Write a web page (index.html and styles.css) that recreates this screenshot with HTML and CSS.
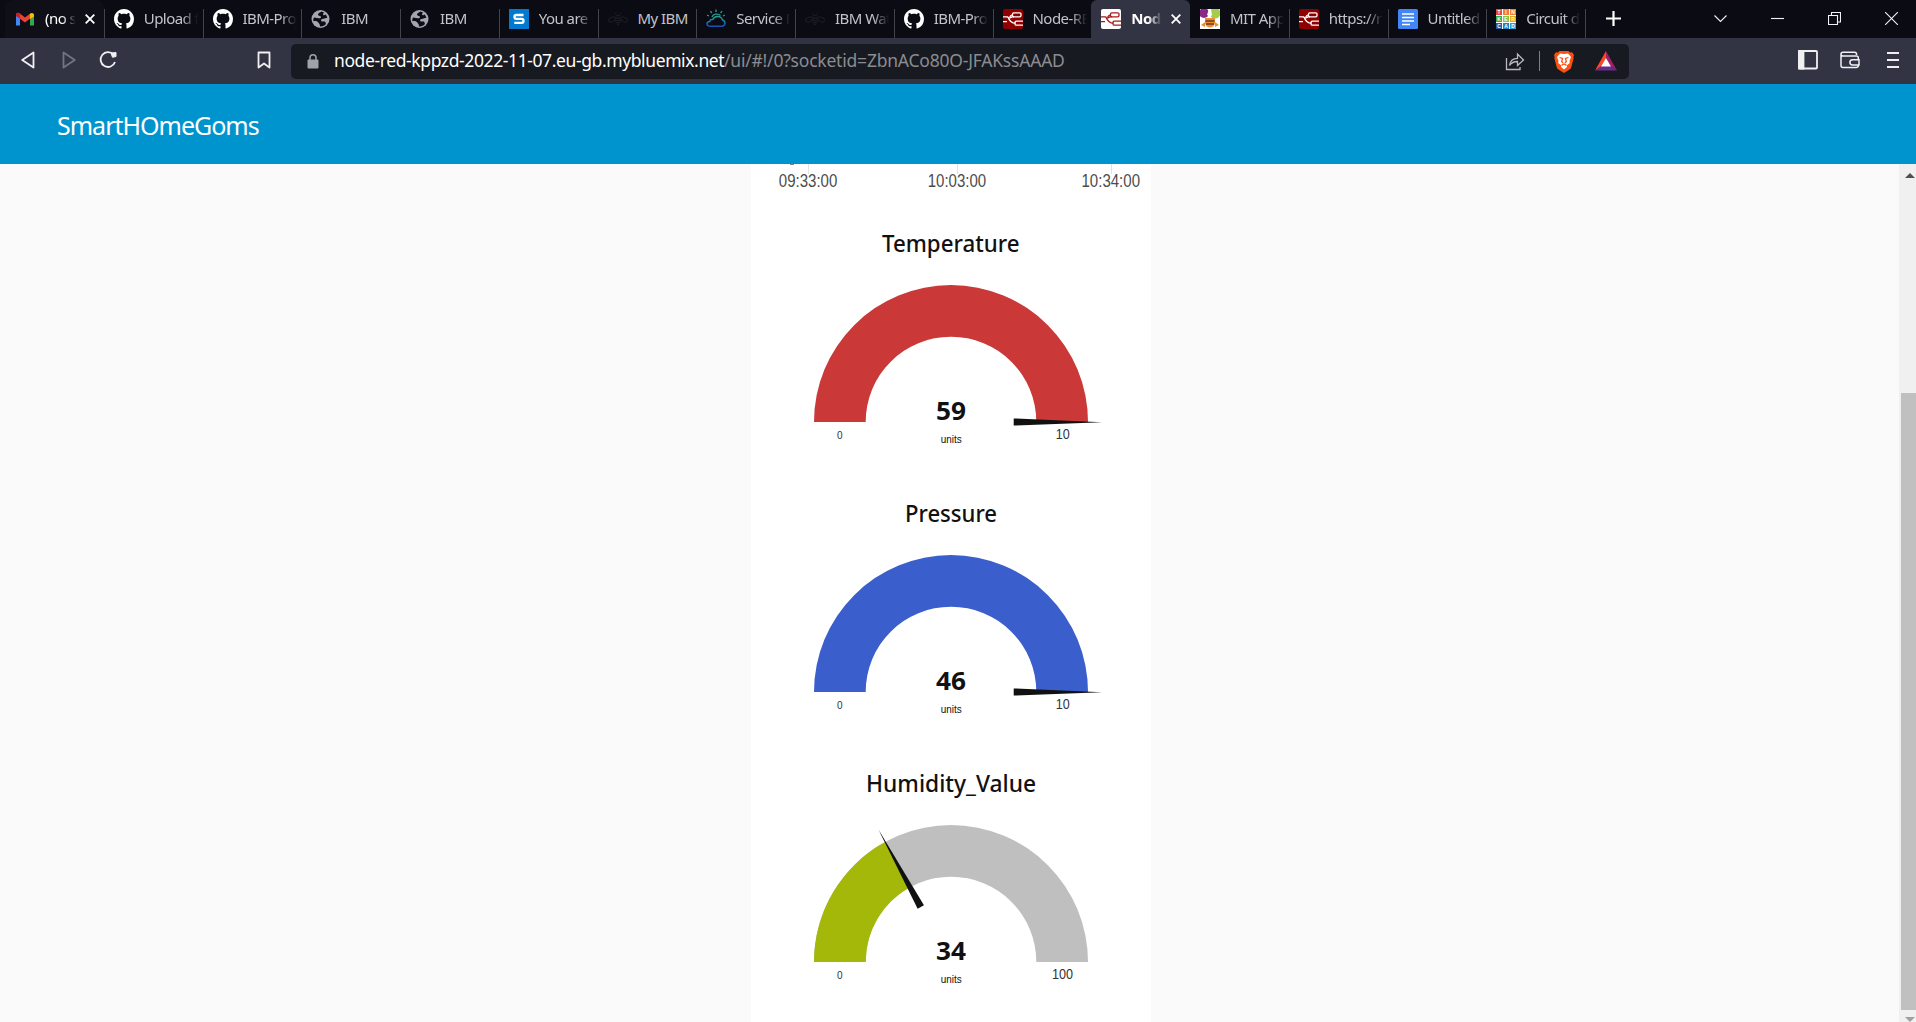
FILE: index.html
```html
<!DOCTYPE html>
<html lang="en">
<head>
<meta charset="utf-8">
<title>Node-RED Dashboard</title>
<link rel="stylesheet" href="styles.css">
</head>
<body>
<svg class="defs" width="0" height="0" aria-hidden="true">
  <symbol id="github" viewBox="0 0 16 16"><path fill="#fff" d="M8 0C3.58 0 0 3.58 0 8c0 3.54 2.29 6.53 5.47 7.59.4.07.55-.17.55-.38 0-.19-.01-.82-.01-1.49-2.01.37-2.53-.49-2.69-.94-.09-.23-.48-.94-.82-1.13-.28-.15-.68-.52-.01-.53.63-.01 1.08.58 1.23.82.72 1.21 1.87.87 2.33.66.07-.52.28-.87.51-1.07-1.78-.2-3.64-.89-3.64-3.95 0-.87.31-1.59.82-2.15-.08-.2-.36-1.02.08-2.12 0 0 .67-.21 2.2.82.64-.18 1.32-.27 2-.27s1.36.09 2 .27c1.53-1.04 2.2-.82 2.2-.82.44 1.1.16 1.92.08 2.12.51.56.82 1.27.82 2.15 0 3.07-1.87 3.75-3.65 3.95.29.25.54.73.54 1.48 0 1.07-.01 1.93-.01 2.2 0 .21.15.46.55.38A8.01 8.01 0 0 0 16 8c0-4.42-3.58-8-8-8z"/></symbol>
  <symbol id="globe" viewBox="0 0 20 20"><circle cx="9.5" cy="10" r="9" fill="#a3a6ae"/><path fill="#0c0c15" d="M10.5 2.500c-1.800 1-4.300 2.200-3.200 3.700.8 1 2.500.3 2.700 1.700.2 1.200-1.400 1.500-2.600 1.300L3.200 8.600C2.300 9.500 2 11 2.500 12.200c1.700-.6 4.300-.2 4.800 1.300.3 1 1.300 1 1.400 2l.3 2c2.700.2 4.600-.8 6-2.500l-.9-2.400c-1.300-.4-3.500.3-4-.9-.5-1.300 1-2 2.400-2 1.600 0 2.300-.8 3.800-.6-.2-1.300-.9-2.600-1.700-3.500-1 .9-2.500.9-2.500-.3 0-.9.400-1.200.9-1.800z"/></symbol>
  <symbol id="bee" viewBox="0 0 20 20"><g fill="none" stroke="#1a1a22" stroke-width="1.300"><ellipse cx="4" cy="10.500" rx="3.700" ry="2.200" transform="rotate(-24 4 10.500)"/><ellipse cx="16" cy="10.500" rx="3.700" ry="2.200" transform="rotate(24 16 10.500)"/><path d="M8 6.500h4M6.800 9h6.400M7 11.500h6M7.500 13.700h5M9 15.500h2M8 5l-1-1.200M12 5l1-1.200"/></g></symbol>
  <symbol id="flow" viewBox="0 0 20 20"><g fill="none" stroke="currentColor" stroke-width="1.300"><rect x="9.500" y="3.800" width="8.500" height="4" rx="1.300"/><rect x="12" y="12.200" width="9" height="4" rx="1.300"/><path d="M0 7.800h4.500c1 1.600 3 1.500 4.500 0h2M5 8c1.500 4.500 4 6.200 7.500 6.200M0 12.600h4M9.500 5.800c-1.500 0-2 .4-2.800 2.200"/></g></symbol>
  <symbol id="close" viewBox="0 0 10 10"><path d="M.7.7l8.600 8.600M9.300.7L.7 9.300" fill="none" stroke="#fff" stroke-width="1.800"/></symbol>
</svg>

<div class="tabstrip">
  <div class="tab first"><svg class="fav" viewBox="0 0 20 20"><path fill="#4285f4" d="M1 6v10.500h4V8z"/><path fill="#34a853" d="M19 6v10.500h-4V8z"/><path fill="#ea4335" d="M1 6c0-2 2-3 3.500-1.700L10 8.500l5.500-4.200v5L10 13.500 5 9.700z"/><path fill="#fbbc04" d="M15 4.700C17 3 19 4.200 19 6v1.500L15 10z"/><path fill="#c5221f" d="M1 6c0-2 2-3 4-1.300v5L1 7z"/></svg><span class="name">(no subject)</span><svg class="x"><use href="#close"/></svg></div>
  <div class="tab"><svg class="fav"><use href="#github"/></svg><span class="name">Upload files</span></div>
  <div class="tab"><svg class="fav"><use href="#github"/></svg><span class="name">IBM-Project</span></div>
  <div class="tab"><svg class="fav"><use href="#globe"/></svg><span class="name">IBM</span></div>
  <div class="tab"><svg class="fav"><use href="#globe"/></svg><span class="name">IBM</span></div>
  <div class="tab"><svg class="fav" viewBox="0 0 20 20"><path fill="#0079cf" d="M0 0h20v20H0z"/><path d="M14.500 6H7.200C5.800 6 5.500 6.500 5.500 7.700S6 9.800 7.200 9.800h5.600c1.300 0 1.700.6 1.700 1.900s-.4 2.100-1.700 2.100H5.300" fill="none" stroke="#fff" stroke-width="2.300"/></svg><span class="name">You are signed</span></div>
  <div class="tab"><svg class="fav"><use href="#bee"/></svg><span class="name whole">My IBM</span></div>
  <div class="tab"><svg class="fav" viewBox="0 0 20 20"><defs><linearGradient id="cl" x2="0" y2="1"><stop stop-color="#279a91"/><stop offset="1" stop-color="#1454b4"/></linearGradient></defs><path d="M4.500 17.200h11.700c3.500-.7 3.700-5.200.3-6.200C15.300 6.600 8.600 6 6.800 10.500c-2-.4-3 .5-3 2-4 .3-3.800 4.700.7 4.700z" fill="none" stroke="url(#cl)" stroke-width="1.500"/><path d="M10 .5v2.500M4.500 2l1.300 2.200M16 2l-1.400 2.200M1 6l2 1M18.800 6.200L17 7M6 8c1-3 6-4 8.500-1.500" fill="none" stroke="#279a91" stroke-width="1.300"/></svg><span class="name">Service Details</span></div>
  <div class="tab"><svg class="fav"><use href="#bee"/></svg><span class="name">IBM Watson</span></div>
  <div class="tab"><svg class="fav"><use href="#github"/></svg><span class="name">IBM-Project</span></div>
  <div class="tab no-line"><svg class="fav red"><use href="#flow"/></svg><span class="name">Node-RED</span></div>
  <div class="tab active"><svg class="fav white"><use href="#flow"/></svg><span class="name">Node-RED</span><svg class="x"><use href="#close"/></svg></div>
  <div class="tab"><svg class="fav" viewBox="0 0 20 20"><path fill="#fff" d="M0 0h20v20H0z"/><circle cx="4" cy="4" r="5" fill="#8b2a86"/><circle cx="15" cy="4" r="5.500" fill="#a3cd4b"/><path fill="#fff" d="M9 0h2l1 6-2 2-3-2z"/><path fill="#ef8b31" d="M5 9h10v5c-1 6-9 6-10 0zM1 16l4-3v5zM19 16l-4-3v5z"/><path stroke="#6a3d23" stroke-width="1.500" d="M5.500 12h9M6 15h8"/></svg><span class="name">MIT App Inv</span></div>
  <div class="tab"><svg class="fav red"><use href="#flow"/></svg><span class="name">https://node</span></div>
  <div class="tab"><svg class="fav" viewBox="0 0 20 20"><rect width="20" height="20" rx="1.500" fill="#4285f4"/><path d="M4 5h12M4 8.500h12M4 12h12M4 15.500h8" stroke="#fff" stroke-width="1.700"/></svg><span class="name">Untitled doc</span></div>
  <div class="tab"><svg class="fav tinker" viewBox="0 0 20 20"><path fill="#fff" d="M0 0h20v20H0z"/><path fill="#e8453c" d="M0 0h6v6H0z"/><path fill="#f47b3a" d="M7 0h6v6H7zM14 0h6v6h-6z"/><path fill="#2fae4e" d="M0 7h6v6H0z"/><path fill="#8cc63f" d="M7 7h6v6H7z"/><path fill="#e6a821" d="M14 7h6v6h-6z"/><path fill="#1c5fa8" d="M0 14h6v6H0z"/><path fill="#2184c4" d="M7 14h6v6H7z"/><path fill="#22a3dc" d="M14 14h6v6h-6z"/><g><text x="3" y="5">T</text><text x="10" y="5">I</text><text x="17" y="5">N</text><text x="3" y="12">K</text><text x="10" y="12">E</text><text x="17" y="12">R</text><text x="3" y="19">C</text><text x="10" y="19">A</text><text x="17" y="19">D</text></g></svg><span class="name">Circuit design</span></div>
  <svg class="plus" viewBox="0 0 15 15"><path d="M7.500 0v15M0 7.500h15" stroke="#fff" stroke-width="2.200"/></svg>
  <div class="window-buttons">
    <svg width="13" height="13" viewBox="0 0 13 13"><path d="M.5 3.500l6 6 6-6"/></svg>
    <svg width="13" height="13" viewBox="0 0 13 13"><path d="M0 6.500h13"/></svg>
    <svg width="13" height="13" viewBox="0 0 13 13"><path d="M.5 3.500h9v9h-9zM3.500 3V.5h9v9.500H10"/></svg>
    <svg width="13" height="13" viewBox="0 0 13 13"><path d="M0 0l13 13M13 0L0 13"/></svg>
  </div>
</div>

<div class="toolbar">
  <svg class="nav-icon" width="14" height="18" viewBox="0 0 14 18"><path d="M12.500 1.500v15L1.200 9z"/></svg>
  <svg class="nav-icon dim" width="14" height="18" viewBox="0 0 14 18"><path d="M1.500 1.500v15L12.800 9z"/></svg>
  <svg class="nav-icon reload" width="18" height="18" viewBox="0 0 18 18"><path d="M14.500 3.600A7.400 7.400 0 1 0 16 11"/><path d="M12 2l5-.5V5.500l-3.500.8z" fill="#f0f0f2" stroke-width="1"/></svg>
  <svg class="nav-icon mark" width="14" height="18" viewBox="0 0 14 18"><path d="M1.500 1.500h11v15L7 12.500l-5.500 4z"/></svg>
  <div class="address">
    <svg class="lock" width="12" height="15" viewBox="0 0 12 15"><rect x=".5" y="5.500" width="11" height="9" rx="1" fill="#a1a3aa"/><path d="M3 6V3.800a3 3 0 0 1 6 0V6" fill="none" stroke="#a1a3aa" stroke-width="1.500"/></svg>
    <span class="host">node-red-kppzd-2022-11-07.eu-gb.mybluemix.net</span><span class="path">/ui/#!/0?socketid=ZbnACo80O-JFAKssAAAD</span>
    <svg class="share" width="20" height="19" viewBox="0 0 20 19"><path d="M1.500 6v11.500H15V15M4.500 13.500c.5-4.500 3.500-7 8-7.200V2l6 6-6 5.500v-4c-3.500 0-6 1-8 4z" fill="none" stroke="#b8babe" stroke-width="1.300"/></svg>
    <i class="divider"></i>
    <svg class="brave" width="20" height="23" viewBox="0 0 20 23"><path fill="#fb5010" d="M5.500 1h9l1.500 1.500 2-.2L20 5l-.7 2 .4 1-2.500 9.500c-.3 1-1 1.600-2 2.300L10 23l-5.200-3.200c-1-.7-1.700-1.300-2-2.300L.3 8l.4-1L0 5l2-2.700 2 .2z"/><path fill="#fff" d="M10 4l4-.5 3 3.500-1.500 4 .3 2-3 2.500L13 17l-3 2.500L7 17l.2-1.500-3-2.500.3-2L3 7l3-3.500z"/><path fill="none" stroke="#fb5010" stroke-width="1.300" d="M5.500 7.500l3 1-.8 3L9 13M14.500 7.500l-3 1 .8 3L11 13M7.500 15.300L10 14l2.500 1.300"/></svg>
    <svg class="bat" width="22" height="20" viewBox="0 0 22 20"><path fill="#ff4724" d="M11 0v7.500L6.500 15 0 19.500z"/><path fill="#9e1f63" d="M11 0v7.500l4.500 7.500 6.500 4.500z"/><path fill="#662d91" d="M0 19.500L6.500 15h9l6.500 4.500z"/><path fill="#fff" d="M11 7l5 8.500H6z"/></svg>
  </div>
  <div class="actions">
    <svg width="20" height="20" viewBox="0 0 20 20"><rect x="1" y="1" width="18" height="17.500" rx="1"/><path d="M1 1h4.500v17.500H1z" fill="#f0f0f2"/></svg>
    <svg width="20" height="18" viewBox="0 0 20 18"><path d="M16.500 4V3c0-1-.7-1.800-2-1.800H3C1.800 1.200 1 2 1 3.200v11.300C1 15.700 1.800 16.500 3 16.500h13c1.500 0 2.300-.7 2.300-2M1 3.500C1.300 4.500 2 5 3 5h13.500c1.200 0 1.800.7 1.800 1.800v2M19 8.700h-6.500a2.600 2.600 0 0 0 0 5.200H19z" stroke-width="1.500"/></svg>
    <svg width="12" height="16" viewBox="0 0 12 16"><path d="M0 1h12M0 8h12M0 15h12"/></svg>
  </div>
</div>

<header class="app-header"><h1>SmartHOmeGoms</h1></header>

<main class="page">
  <section class="card">
    <svg class="axis" width="400" height="50" viewBox="0 0 400 50">
      <path d="M57.500 0v10M206.500 0v10M360.500 0v10" stroke="#e2e2e2"/>
      <path d="M39 .5h4" stroke="#888"/>
      <text x="27.800" y="23.300" textLength="58.500" lengthAdjust="spacingAndGlyphs">09:33:00</text>
      <text x="176.700" y="23.300" textLength="58.500" lengthAdjust="spacingAndGlyphs">10:03:00</text>
      <text x="330.500" y="23.300" textLength="58.500" lengthAdjust="spacingAndGlyphs">10:34:00</text>
    </svg>
    <svg class="gauge" width="400" height="270" viewBox="-200 -208 400 270">
      <text class="label" y="-170.300" x="-69" textLength="137.500" lengthAdjust="spacingAndGlyphs">Temperature</text>
      <path fill="#ca3838" d="M-137 0A137 137 0 0 1 137 0H85.300A85.300 85.300 0 0 0-85.300 0z"/>
      <path class="needle" d="M62.700-3.600v7.200L151 .2z"/>
      <text class="value" x="-15" y="-2" textLength="30" lengthAdjust="spacingAndGlyphs">59</text><text class="unit" x="-10.300" y="21.200" textLength="21" lengthAdjust="spacingAndGlyphs">units</text>
      <text class="min" x="-111.300" y="17">0</text><text class="max" x="104.700" y="17" textLength="14" lengthAdjust="spacingAndGlyphs">10</text>
    </svg>
    <svg class="gauge" width="400" height="270" viewBox="-200 -208 400 270">
      <text class="label" y="-170.300" x="-46" textLength="92" lengthAdjust="spacingAndGlyphs">Pressure</text>
      <path fill="#3a5ecb" d="M-137 0A137 137 0 0 1 137 0H85.300A85.300 85.300 0 0 0-85.300 0z"/>
      <path class="needle" d="M62.700-3.600v7.200L151 .2z"/>
      <text class="value" x="-15" y="-2" textLength="30" lengthAdjust="spacingAndGlyphs">46</text><text class="unit" x="-10.300" y="21.200" textLength="21" lengthAdjust="spacingAndGlyphs">units</text>
      <text class="min" x="-111.300" y="17">0</text><text class="max" x="104.700" y="17" textLength="14" lengthAdjust="spacingAndGlyphs">10</text>
    </svg>
    <svg class="gauge" width="400" height="270" viewBox="-200 -208 400 270">
      <text class="label" y="-170.300" x="-85" textLength="170" lengthAdjust="spacingAndGlyphs">Humidity_Value</text>
      <path fill="#bfbfbf" d="M-137 0A137 137 0 0 1 137 0H85.300A85.300 85.300 0 0 0-85.300 0z"/>
      <path fill="#a3b808" d="M-137 0A137 137 0 0 1-66-120L-41.100-74.700A85.300 85.300 0 0 0-85.300 0z"/>
      <path class="needle" transform="rotate(-118.800)" d="M62.700-3.600v7.200L151 .2z"/>
      <text class="value" x="-15" y="-2" textLength="30" lengthAdjust="spacingAndGlyphs">34</text><text class="unit" x="-10.300" y="21.200" textLength="21" lengthAdjust="spacingAndGlyphs">units</text>
      <text class="min" x="-111.300" y="17">0</text><text class="max" x="101" y="17" textLength="21" lengthAdjust="spacingAndGlyphs">100</text>
    </svg>
  </section>
  <div class="scrollbar">
    <svg width="10" height="5" viewBox="0 0 10 5"><path fill="#505050" d="M5 0l5 5H0z"/></svg>
    <div class="thumb"></div>
    <svg width="10" height="5" viewBox="0 0 10 5"><path fill="#a0a0a0" d="M5 5l5-5H0z"/></svg>
  </div>
</main>
</body>
</html>
```
FILE: styles.css
```css
* { box-sizing: border-box; }
body {
  margin: 0;
  height: 1022px;
  display: flex;
  flex-direction: column;
  overflow: hidden;
  background: #fafafa;
  font-family: "Noto Sans", "Open Sans", sans-serif;
}
svg { display: block; flex: none; }
.defs { position: absolute; }

/* Tab strip */
.tabstrip {
  display: flex;
  height: 38px;
  padding-left: 5px;
  background: #0b0b14;
  color: #c3c4c8;
}
.tab {
  position: relative;
  display: flex;
  flex: 0 0 98.75px;
  height: 38px;
  padding: 9px 0 0 10px;
  font-size: 15px;
  line-height: 18px;
  letter-spacing: -0.55px;
}
.tab::after {
  content: "";
  position: absolute;
  right: -1px;
  top: 9px;
  width: 1px;
  height: 29px;
  background: #43434a;
}
.tab.first { background: #0f0f18; color: #fff; border-radius: 8px 8px 0 0; }
.tab.active { background: #323443; color: #fff; font-weight: 700; border-radius: 6px 6px 0 0; }
.tab.active::after, .tab.no-line::after { display: none; }
.fav { width: 20px; height: 20px; margin-right: 10px; }
.fav.red { background: #8f0000; color: #fff; border-radius: 2px; }
.fav.white { background: #fff; color: #a81c1c; border-radius: 2px; }
.tinker text {
  font: 700 5px "Liberation Sans", sans-serif;
  letter-spacing: 0;
  fill: #fff;
  text-anchor: middle;
}
.name {
  width: 54px;
  height: 20px;
  overflow: hidden;
  white-space: nowrap;
  -webkit-mask-image: linear-gradient(90deg, #000 38px, transparent 54px);
  mask-image: linear-gradient(90deg, #000 38px, transparent 54px);
}
.name.whole { -webkit-mask-image: none; mask-image: none; }
.first .name, .active .name {
  width: 30px;
  -webkit-mask-image: linear-gradient(90deg, #000 17px, transparent 31px);
  mask-image: linear-gradient(90deg, #000 17px, transparent 31px);
}
.x { width: 10px; height: 10px; margin: 5px 0 0 10px; }
.plus { width: 15px; height: 15px; margin: 11px 0 0 21px; }
.window-buttons {
  display: flex;
  gap: 44px;
  margin: 12px 18.5px 0 auto;
  fill: none;
  stroke: #f2f2f2;
  stroke-width: 1.1;
}

/* Toolbar */
.toolbar {
  display: flex;
  align-items: center;
  height: 46px;
  padding: 0 17px 0 21px;
  background: #323443;
}
.nav-icon {
  margin-right: 27px;
  margin-bottom: 2px;
  fill: none;
  stroke: #f0f0f2;
  stroke-width: 1.8;
  stroke-linejoin: round;
}
.nav-icon.dim { stroke: #727481; margin-right: 23px; }
.nav-icon.reload { margin-right: 140px; }
.nav-icon.mark { margin-right: 20px; }
.address {
  display: flex;
  align-items: center;
  width: 1338px;
  height: 35px;
  padding-left: 16px;
  border-radius: 5px;
  background: #181a21;
  font-size: 17.5px;
  white-space: nowrap;
}
.lock { margin-right: 15px; }
.host, .path { margin-top: -2px; }
.host { width: 390px; color: #fff; letter-spacing: -0.39px; }
.path { width: 342px; color: #8b8c91; letter-spacing: -0.21px; }
.share { margin-left: 439px; }
.divider { width: 1px; height: 20px; margin: 0 14px 0 14px; background: #7d7f86; }
.bat { margin-left: 21px; }
.actions {
  display: flex;
  align-items: center;
  margin-left: auto;
  padding-bottom: 2px;
  gap: 22px;
  fill: none;
  stroke: #f0f0f2;
  stroke-width: 1.8;
}
.actions svg:last-child { margin-left: 5px; }

/* Dashboard */
.app-header {
  display: flex;
  align-items: center;
  height: 80px;
  padding-left: 57px;
  background: #0094ce;
  color: #fff;
}
h1 { margin: 0 0 -2px; font-size: 25px; font-weight: 400; letter-spacing: -1px; }
.page {
  display: grid;
  grid-template-columns: 751px 400px 1fr 17px;
  height: 858px;
}
.card { grid-column: 2; background: #fff; overflow: hidden; }
.axis text {
  font: 17.5px "Liberation Sans", Arial, sans-serif;
  fill: #4c4c4c;
}
.gauge text { fill: #111; }
.gauge .label { font-size: 24px; font-weight: 500; }
.gauge .value { font-size: 24.5px; font-weight: 700; }
.gauge .unit, .gauge .min { font: 10px "Liberation Sans", Arial, sans-serif; }
.gauge .min { text-anchor: middle; }
.gauge .max { font: 14px "Liberation Sans", Arial, sans-serif; }
.gauge .min, .gauge .max { fill: #333; }
.needle { fill: #111; }
.scrollbar {
  grid-column: 4;
  display: flex;
  flex-direction: column;
  padding-top: 9px;
  background: #f0f0f0;
}
.scrollbar svg { margin-left: 6px; }
.thumb { height: 617px; margin: 215px 0 7px 2px; background: #c0c0c0; }
```
